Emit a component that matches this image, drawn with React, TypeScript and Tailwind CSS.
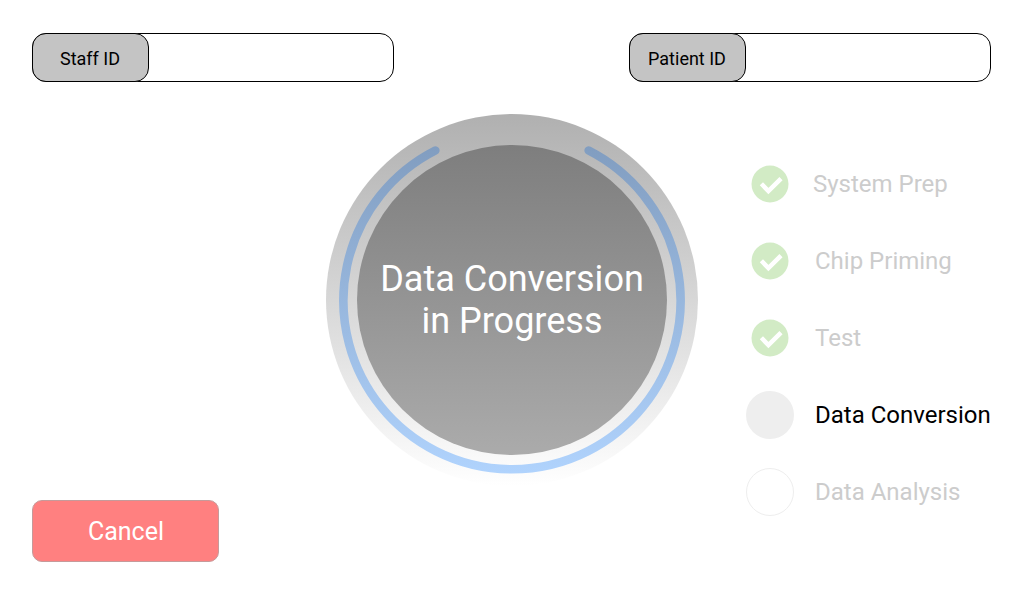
type StepState = "done" | "current" | "pending";

const steps: { label: string; state: StepState; nudge?: boolean }[] = [
  { label: "System Prep", state: "done", nudge: true },
  { label: "Chip Priming", state: "done" },
  { label: "Test", state: "done" },
  { label: "Data Conversion", state: "current" },
  { label: "Data Analysis", state: "pending" },
];

function IdField({ label }: { label: string }) {
  return (
    <div className="flex h-[49px] w-[362px] rounded-[14px] border border-black bg-white">
      <div className="-m-px flex w-[117px] items-center justify-center rounded-[14px] border border-black bg-[#c4c4c4] pt-[2px] pr-px text-[18px] text-black">
        {label}
      </div>
    </div>
  );
}

function StepIcon({ state }: { state: StepState }) {
  if (state === "done") {
    return (
      <svg className="size-12" viewBox="0 0 48 48">
        <circle cx="24" cy="24" r="18.5" fill="#d2ebc5" />
        <path d="M15.4 23.8 L22.4 31 L35 18.6" fill="none" stroke="#fff" strokeWidth="4.5" />
      </svg>
    );
  }
  if (state === "current") return <div className="size-12 rounded-full bg-[#eeeeee]" />;
  return <div className="size-12 rounded-full border border-[#eeeeee] bg-white" />;
}

function Dial() {
  return (
    <div className="grid size-[372px] shrink-0 place-items-center rounded-full bg-linear-to-b from-[#b0b0b0] to-white">
      <svg className="col-start-1 row-start-1 size-[372px]" viewBox="0 0 372 372">
        <defs>
          <linearGradient id="arc" gradientUnits="userSpaceOnUse" x1="0" y1="32" x2="0" y2="359">
            <stop offset="0" stopColor="#819dc0" />
            <stop offset="1" stopColor="#b0d3fd" />
          </linearGradient>
        </defs>
        <path
          d="M109.3 36.5 A168.6 168.6 0 1 0 262.7 36.5"
          fill="none"
          stroke="url(#arc)"
          strokeWidth="8.6"
          strokeLinecap="round"
        />
      </svg>
      <div className="col-start-1 row-start-1 flex size-[310px] items-center justify-center rounded-full bg-linear-to-b from-[#7e7e7e] to-[#ababab] text-center text-[36px] leading-[42px] text-white">
        <p>
          Data Conversion
          <br />
          in Progress
        </p>
      </div>
    </div>
  );
}

export default function App() {
  return (
    <div className="flex h-[600px] w-[1024px] flex-col overflow-hidden bg-white pt-[33px] pr-[33px] pl-8 font-[Roboto,sans-serif]">
      <header className="flex justify-between">
        <IdField label="Staff ID" />
        <IdField label="Patient ID" />
      </header>
      <main className="mt-8 flex h-[448px]">
        <div className="flex w-[294px] shrink-0 items-end">
          <button className="h-[62px] w-[187px] rounded-[10px] border border-[#c69a9a] bg-[#ff8080] pt-[2px] pl-px text-[25px] text-white">
            Cancel
          </button>
        </div>
        <Dial />
        <ul className="mt-[46px] ml-12 flex flex-col gap-[29px]">
          {steps.map((s) => (
            <li
              key={s.label}
              className={`flex h-12 items-center whitespace-nowrap text-[24px] ${
                s.nudge ? "gap-[19px]" : "gap-[21px]"
              } ${s.state === "current" ? "text-black" : "text-[#cccccc]"}`}
            >
              <StepIcon state={s.state} />
              <span>{s.label}</span>
            </li>
          ))}
        </ul>
      </main>
    </div>
  );
}
